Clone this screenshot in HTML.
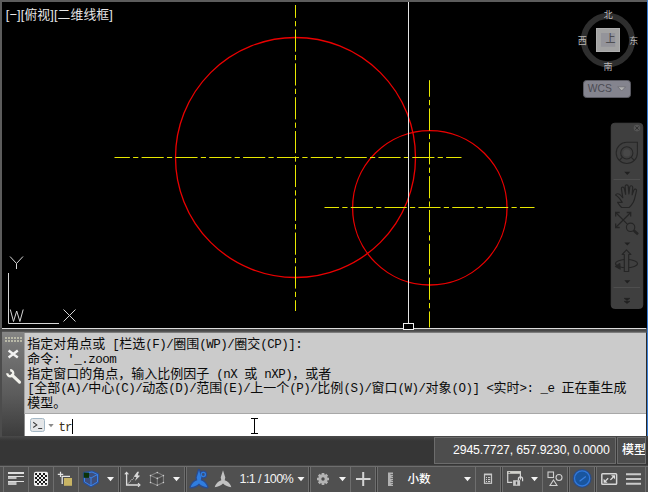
<!DOCTYPE html>
<html lang="zh-CN">
<head>
<meta charset="utf-8">
<title>AutoCAD</title>
<style>
*{box-sizing:border-box;margin:0;padding:0}
html,body{width:648px;height:492px;overflow:hidden;background:#363636}
body{position:relative;font-family:"Liberation Sans","Noto Sans CJK SC",sans-serif}
.abs{position:absolute}
#canvas{left:0;top:0;width:648px;height:333px}
#vplabel{left:5.8px;top:7px;color:#e6e6e6;font-size:12.8px;line-height:16px;white-space:nowrap;letter-spacing:0.12px}
#compass span{position:absolute;color:#b8b8b8;font-size:9px;line-height:10px;font-family:"Liberation Sans","Noto Sans CJK SC",sans-serif}
#wcs{left:583px;top:80px;width:48px;height:18px;border-radius:3.5px;background:#84848e;border:1px solid #5a5a62;color:#4a4a52;font-size:10.3px;line-height:15.5px;padding-left:3.8px}
#gutter{left:2px;top:332px;width:22px;height:104px;background:linear-gradient(#868686 0,#767676 14px,#5b5b5b 63px,#3c3c3c 104px)}
#hist{left:24px;top:333px;width:622px;height:81px;background:#cbcbcb;border-left:1px solid #a2a2a2;border-bottom:1px solid #a8a8a8;overflow:hidden}
#hist div{position:absolute;left:2.2px;white-space:nowrap;color:#0a0a0a;font-family:"Liberation Mono","Noto Sans CJK SC",monospace;font-size:13px;font-weight:400;line-height:15px;height:15px}
#hist b{font-weight:normal;font-size:12.5px;letter-spacing:-0.5px;font-family:"Liberation Mono",monospace}
#input{left:24px;top:414px;width:622px;height:22px;background:#fff;border-left:1px solid #8c8c8c}
#input .t{position:absolute;left:33.4px;top:6.6px;font-family:"Liberation Mono",monospace;font-size:12.5px;letter-spacing:-0.833px;line-height:15px;color:#3a3020}
#status{left:0;top:466px;width:648px;height:26px;background:#505050;border-top:1px solid #6e6e6e}
#status i{position:absolute;top:0;width:1px;height:25px;background:#6e6e6e}
#status i.g{background:#3a3a3a}
#status .tx{position:absolute;color:#f2f2f2;font-size:12.6px;line-height:16px;top:4px;white-space:nowrap}
.box{border:1px solid #6c6c6c;background:#4d4d4d;color:#f4f4f4;white-space:nowrap}
</style>
</head>
<body>
<!-- drawing canvas -->
<svg id="canvas" class="abs" width="648" height="333" viewBox="0 0 648 333">
  <rect x="0" y="0" width="648" height="333" fill="#5c5c5c"/>
  <rect x="2" y="2" width="645" height="326" fill="#000"/>
  <rect x="647" y="0" width="1" height="333" fill="#3b7fd6"/>
  <!-- strip under canvas -->
  <rect x="0" y="328" width="647" height="5" fill="#484848"/>
  <rect x="2" y="328" width="644" height="1" fill="#dcdcdc"/>
  <rect x="2" y="331" width="644" height="1" fill="#565656"/>
  <rect x="2" y="332" width="644" height="1" fill="#7c7c7c"/>
  <!-- circles -->
  <g fill="none" stroke="#ea0000" stroke-width="1.3">
    <circle cx="295.5" cy="157.5" r="120"/>
    <circle cx="429.8" cy="207.8" r="77.2"/>
  </g>
  <!-- center lines -->
  <g stroke="#e8e800" stroke-width="1" stroke-dasharray="22.15 3.23 5.23 3.23" fill="none">
    <line x1="114.5" y1="157.5" x2="461.5" y2="157.5" stroke-dashoffset="6.775"/>
    <line x1="295.5" y1="5" x2="295.5" y2="311" stroke-dashoffset="9.300"/>
    <line x1="324.5" y1="207.5" x2="534.5" y2="207.5" stroke-dashoffset="7.595"/>
    <line x1="429.5" y1="80.2" x2="429.5" y2="327.4" stroke-dashoffset="5.6"/>
  </g>
  <!-- crosshair -->
  <rect x="408" y="2" width="1" height="321" fill="#e4e4e4"/>
  <rect x="403.5" y="323.5" width="10" height="6" fill="#000" stroke="#f0f0f0" stroke-width="1"/>
  <!-- UCS icon -->
  <g stroke="#d6d6d6" stroke-width="1" fill="none">
    <path d="M8.5 273v50.5H59"/>
    <path d="M10 256.5l6.5 7 6.5-7M16.5 263.5v5.5"/>
    <path d="M63.5 309.5l12 12M75.5 309.5l-12 12"/>
    <path d="M10.3 309.5l3.2 12 3.2-10.5 3.2 10.5 3.3-12"/>
  </g>
  <!-- view cube compass -->
  <circle cx="607.9" cy="40.15" r="24.1" fill="none" stroke="#2e2e2e" stroke-width="5.9"/>
  <rect x="596.500" y="28.500" width="23" height="23" fill="#a2a2a2" stroke="#aeaeae" stroke-width="1"/>
  <rect x="601" y="33" width="14.2" height="13.8" fill="#94949a"/>
</svg>

<div id="vplabel" class="abs">[−][俯视][二维线框]</div>

<div id="compass" class="abs" style="left:0;top:0">
  <span style="left:603.8px;top:9.6px">北</span>
  <span style="left:603.4px;top:61.6px">南</span>
  <span style="left:577.7px;top:35.6px">西</span>
  <span style="left:629.3px;top:35.8px">东</span>
  <span style="left:605.6px;top:34px;color:#3e3e42;font-size:10px">上</span>
</div>
<div id="wcs" class="abs">WCS<svg class="abs" style="left:32.6px;top:5px" width="10" height="7"><path d="M0.800 0.800h7.800l-3.900 4.200z" fill="#b0b0b0" stroke="#6c6c74" stroke-width=".8"/></svg></div>

<!-- navigation bar -->
<svg class="abs" style="left:610px;top:122px" width="34" height="188" viewBox="0 0 34 188">
  <rect x="1.200" y="1.200" width="31.600" height="185.300" rx="3.500" fill="#3f3f3f" stroke="#464646" stroke-width=".8"/>
  <circle cx="27" cy="6.100" r="3.300" fill="#555"/>
  <path d="M25.300 4.400l3.400 3.400M28.700 4.400l-3.400 3.400" stroke="#303030" stroke-width="1" fill="none"/>
  <g fill="none" stroke="#272727" stroke-width="1.100">
    <path d="M16.800 20.300h10.600v10.600a10.600 10.600 0 1 1-10.600-10.600z"/>
    <circle cx="16.800" cy="30.900" r="6.100"/>
    <circle cx="16.800" cy="30.900" r="3.700" fill="#484848" stroke="none"/>
    <path d="M12.500 35.200l-3.300 3.300M21.100 35.200l3.300 3.300"/>
  </g>
  <path d="M3.500 57.500h26.500M3.500 165.500h26.500" stroke="#4e4e4e" stroke-width="1" fill="none"/>
  <g fill="#202020">
    <path d="M14.300 49.800h6l-3 3.200z"/>
    <path d="M14.300 120.400h6l-3 3.200z"/>
    <path d="M14.300 158.200h6l-3 3.200z"/>
  </g>
  <!-- hand -->
  <g fill="none" stroke="#252525" stroke-width="1.050" stroke-linejoin="round" stroke-linecap="round" transform="translate(-0.9 -4.2) scale(1.14 1.07)">
    <path d="M11.500 79c-1.500-2.500-3.300-5.300-5.800-6.800 0.600-1.700 3-1.700 4.600 0.400l1.700 2.100-1.200-8.200c-0.300-1.900 2-2.400 2.500-0.500l1.200 5.500-0.400-7.300c-0.100-2 2.500-2.100 2.700-0.100l0.600 7 0.700-6.300c0.300-1.900 2.700-1.600 2.600 0.300l-0.500 6.800 1.500-4.300c0.700-1.700 2.800-1 2.300 0.800-1 4-1.300 7.800-2.800 10.500-1 1.800-2 3.400-3.500 4.900h-6.700c-1.600-1.200-2.300-2.600-3.500-4.800z"/>
  </g>
  <!-- zoom extents -->
  <g fill="none" stroke="#252525" stroke-width="1.150">
    <path d="M6.200 91l13.600 13.600M20.200 91l-14 14"/>
    <path d="M5.700 94.500v-4h4M16.700 90.500h4v4M5.700 101.500v4h4" stroke-width="1.300"/>
    <circle cx="20.600" cy="105.300" r="4.200" fill="#3f3f3f"/>
    <path d="M23.800 108.600l4.200 3.700" stroke-width="2.600"/>
  </g>
  <!-- orbit -->
  <g fill="none" stroke="#252525" stroke-width="1.150" stroke-linejoin="round">
    <ellipse cx="16.500" cy="141.600" rx="11" ry="4.100"/>
    <path d="M14.300 149.500v-17h-2.100l4.300-4.700 4.300 4.700h-2.100v17z" fill="#3f3f3f"/>
    <path d="M9.800 141.500l-4.300 3 4.600 2.600z" fill="#252525"/>
  </g>
  <path d="M14 176.300l3 2.300 3-2.300zM14 179.300l3 2.300 3-2.300z" fill="#202020" stroke="#202020" stroke-width=".5"/>
</svg>

<!-- command line -->
<div id="gutter" class="abs">
  <svg class="abs" style="left:0;top:0" width="22" height="104" viewBox="0 0 22 104">
    <g fill="#b9b9a8">
      <rect x="3" y="5" width="2" height="2"/><rect x="6" y="5" width="2" height="2"/><rect x="9" y="5" width="2" height="2"/><rect x="12" y="5" width="2" height="2"/><rect x="15" y="5" width="2" height="2"/><rect x="18" y="5" width="2" height="2"/>
      <rect x="3" y="8" width="2" height="2"/><rect x="6" y="8" width="2" height="2"/><rect x="9" y="8" width="2" height="2"/><rect x="12" y="8" width="2" height="2"/><rect x="15" y="8" width="2" height="2"/><rect x="18" y="8" width="2" height="2"/>
    </g>
    <path d="M6.600 18.500l9.200 7M15.800 18.500l-9.200 7" stroke="#f2f2f2" stroke-width="2.400" fill="none"/>
    <g transform="translate(8.300 41.300) rotate(44)" fill="none" stroke="#f2f2ec">
      <path d="M-2.200 2.100A3 3 0 1 0 -2.200 -2.100" stroke-width="2.300"/>
      <path d="M2.500 0h10.300" stroke-width="3.100" stroke-linecap="round"/>
    </g>
  </svg>
</div>
<div id="hist" class="abs">
  <div style="top:4px">指定对角点或<b> [</b>栏选<b>(F)/</b>圈围<b>(WP)/</b>圈交<b>(CP)]:</b></div>
  <div style="top:18.75px">命令<b>: '_.zoom</b></div>
  <div style="top:33.5px">指定窗口的角点，输入比例因子<b> (nX </b>或<b> nXP)</b>，或者</div>
  <div style="top:48.25px"><b>[</b>全部<b>(A)/</b>中心<b>(C)/</b>动态<b>(D)/</b>范围<b>(E)/</b>上一个<b>(P)/</b>比例<b>(S)/</b>窗口<b>(W)/</b>对象<b>(O)] &lt;</b>实时<b>&gt;: _e </b>正在重生成</div>
  <div style="top:63px">模型。</div>
</div>
<div id="input" class="abs">
  <svg class="abs" style="left:0;top:0" width="260" height="22" viewBox="0 0 260 22">
    <rect x="5.500" y="4.500" width="14" height="13" rx="2" fill="#e4e6e8" stroke="#a4b8c6"/>
    <path d="M8.200 8.300l3.600 2.600-3.600 2.600" fill="none" stroke="#3a3a3a" stroke-width="1.050"/>
    <path d="M13.200 14.500h4" stroke="#3a3a3a" stroke-width="1"/>
    <path d="M23.300 10h5.400l-2.700 3.200z" fill="#8a8a8a"/>
    <rect x="47" y="5" width="1" height="15" fill="#000"/>
    <path d="M226 4.500h3M230 4.500h3M226 19.500h3M230 19.500h3" stroke="#000" stroke-width="1"/>
    <rect x="229" y="4" width="1" height="16" fill="#000"/>
  </svg>
  <span class="t">tr</span>
</div>
<div class="abs" style="left:0;top:436px;width:648px;height:30px;background:linear-gradient(#4a4a4a 0,#3c3c3c 3px,#363636 5px,#363636 29px,#464646 29px)"></div>
<div class="abs" style="left:0;top:332px;width:2px;height:105px;background:#4c4c4c"></div>
<div class="abs" style="left:647px;top:333px;width:1px;height:103px;background:#3b7fd6"></div>
<div class="abs" style="left:646px;top:333px;width:1px;height:103px;background:#2a2a2a"></div>

<!-- coordinates -->
<div class="abs box" style="left:434px;top:437px;width:182px;height:27px;font-size:12.3px;line-height:25px;padding-left:18px;letter-spacing:-0.15px;color:#fff">2945.7727, 657.9230, 0.0000</div>
<div class="abs box" style="left:617px;top:437px;width:29px;height:27px;font-size:12px;font-weight:500;line-height:25px;padding-left:4px;overflow:hidden;color:#fff">模型</div>

<!-- status bar -->
<div id="status" class="abs">
  <i style="left:3px"></i><i style="left:28px"></i><i style="left:53px"></i><i style="left:78px"></i>
  <i style="left:118px"></i><i class="g" style="left:119px"></i><i style="left:120px"></i>
  <i style="left:184px"></i><i class="g" style="left:185px"></i><i style="left:186px"></i>
  <i style="left:308px"></i><i class="g" style="left:309px"></i><i style="left:310px"></i>
  <i style="left:350px"></i>
  <i style="left:375px"></i><i class="g" style="left:376px"></i><i style="left:377px"></i>
  <i style="left:475px"></i>
  <i style="left:500px"></i><i class="g" style="left:501px"></i><i style="left:502px"></i>
  <i style="left:542px"></i>
  <i style="left:567px"></i><i class="g" style="left:568px"></i><i style="left:569px"></i>
  <i style="left:594px"></i><i class="g" style="left:595px"></i><i style="left:596px"></i>
  <i style="left:645px"></i>
  <span class="tx" style="left:239.6px;letter-spacing:-0.68px;top:4.4px">1:1 / 100%</span>
  <span class="tx" style="left:407.5px;font-size:11.6px;top:4px;font-weight:500;color:#fff">小数</span>
  <svg class="abs" style="left:0;top:0" width="648" height="25" viewBox="0 467 648 25">
    <!-- dropdown triangles -->
    <g fill="#f4f4f4">
      <path d="M107 477h7l-3.500 4.200z"/><path d="M173 477h7l-3.500 4.200z"/><path d="M297.500 477h7l-3.500 4.200z"/>
      <path d="M339 477h7l-3.500 4.200z"/><path d="M464 477h7l-3.500 4.200z"/><path d="M531 477h7l-3.500 4.200z"/>
    </g>
    <!-- icon 1 bars -->
    <g>
      <rect x="8" y="472" width="16" height="2" fill="#dedede"/>
      <rect x="8" y="476" width="16" height="1" fill="#dedede"/><rect x="8" y="477" width="8.500" height="2" fill="#c2c2c2"/>
      <rect x="8" y="481" width="16" height="1" fill="#dedede"/><rect x="8" y="482" width="8.500" height="3" fill="#c2c2c2"/>
    </g>
    <!-- icon 2 checker -->
    <g>
      <rect x="34.500" y="472.400" width="13" height="13" rx="1.200" fill="#161616" stroke="#ececec" stroke-width="1.100"/>
      <g fill="#f0f0f0"><rect x="37" y="473" width="2" height="2"/><rect x="41" y="473" width="2" height="2"/><rect x="45" y="473" width="2" height="2"/><rect x="35" y="475" width="2" height="2"/><rect x="39" y="475" width="2" height="2"/><rect x="43" y="475" width="2" height="2"/><rect x="37" y="477" width="2" height="2"/><rect x="41" y="477" width="2" height="2"/><rect x="45" y="477" width="2" height="2"/><rect x="35" y="479" width="2" height="2"/><rect x="39" y="479" width="2" height="2"/><rect x="43" y="479" width="2" height="2"/><rect x="37" y="481" width="2" height="2"/><rect x="41" y="481" width="2" height="2"/><rect x="45" y="481" width="2" height="2"/><rect x="35" y="483" width="2" height="2"/><rect x="39" y="483" width="2" height="2"/><rect x="43" y="483" width="2" height="2"/></g>
    </g>
    <!-- icon 3 -->
    <path d="M57.800 474.400h5.400M60.500 471.700v5.400" stroke="#e4e4e4" stroke-width="1.200"/>
    <path d="M62.200 484v-7.600h7.800" fill="none" stroke="#e4e4e4" stroke-width="1.300"/>
    <rect x="64" y="478" width="8" height="7.800" fill="#c8b464"/>
    <!-- icon 4 blue cube -->
    <g>
      <path d="M84.500 473.300l7.500-1.300 5.500 2.500v7.500l-6.500 3.800-6.500-4z" fill="#3a4f82" stroke="#2d4f94" stroke-width="3.200" stroke-linejoin="round"/>
      <path d="M84.500 473.300l7.500-1.300 5.500 2.500v7.500l-6.500 3.800-6.500-4z" fill="#3f4f7c" stroke="#3a84ea" stroke-width="1" stroke-linejoin="round"/>
      <path d="M85 474.500l6 3.500 6.500-3.500M91 478v7.800" fill="none" stroke="#3a84ea" stroke-width="1"/>
      <rect x="83.700" y="472.600" width="5.400" height="5.200" fill="#0b3309"/>
    </g>
    <!-- icon 5 axes -->
    <g fill="none" stroke="#dcdcdc" stroke-width="1.300">
      <path d="M126.600 473v12h12.500"/>
      <path d="M124.800 474.300l1.800-2 1.800 2M138 483.200l2 1.800-2 1.800" stroke-width="1.100"/>
      <path d="M128 483.600l6-6" stroke-width="1" stroke-dasharray="1.600 .8"/>
    </g>
    <path d="M137.300 471.800l-3.600 4.900 2.800 0.400-1.600 4 5.200-5.300-2.400-0.500 1.300-3.500z" fill="#d8d8d8"/>
    <!-- icon 6 wire cube -->
    <g fill="#494949" stroke="#848484" stroke-width="1.050" stroke-linejoin="round">
      <path d="M157.300 472.500l6.100 3.100v6.900l-6.100 2.800-6.800-2.800v-6.900z"/>
      <path d="M150.500 475.600l6.800 2.800 6.100-2.800M157.300 478.400v6.900" fill="none"/>
    </g>
    <g fill="#cfcfcf"><circle cx="157.300" cy="472.500" r=".8"/><circle cx="150.500" cy="475.600" r=".8"/><circle cx="163.400" cy="475.600" r=".8"/><circle cx="157.300" cy="478.400" r=".8"/><circle cx="150.500" cy="482.500" r=".8"/><circle cx="163.400" cy="482.500" r=".8"/><circle cx="157.300" cy="485.300" r=".8"/></g>
    <!-- icon 7 blue annotation -->
    <g>
      <path d="M199 470.200Q200.2 474 201.3 477.600L200.7 480.200Q205.6 481.600 207.3 487.200Q202.4 487 199 483.600Q195.6 487 190.7 487.200Q192.4 481.600 197.3 480.200L196.7 477.600Q197.8 474 199 470.200z" fill="#2f7de0" stroke="#2b4c8e" stroke-width="2.600" stroke-linejoin="round"/>
      <circle cx="203.300" cy="474.500" r="2.700" fill="#2b4c8e" stroke="#2b4c8e" stroke-width="2.400"/>
      <path d="M199 470.200Q200.2 474 201.3 477.600L200.7 480.200Q205.6 481.600 207.3 487.200Q202.4 487 199 483.600Q195.6 487 190.7 487.200Q192.4 481.600 197.3 480.200L196.7 477.600Q197.8 474 199 470.200z" fill="#2f7de0"/>
      <circle cx="203.300" cy="474.500" r="2.100" fill="#3c4f78" stroke="#2f7de0" stroke-width="1.300"/>
    </g>
    <!-- icon 8 gray star -->
    <path d="M223 470.200Q224.2 474 225.3 477.600L224.7 480.200Q229.6 481.600 231.3 487.200Q226.4 487 223 483.600Q219.6 487 214.7 487.200Q216.4 481.600 221.3 480.200L220.7 477.600Q221.8 474 223 470.200z" fill="#c2c2c2"/>
    <!-- gear -->
    <g>
      <g stroke="#b4b4b4" stroke-width="2.700">
        <path d="M323 473v12M317 479h12M318.800 474.800l8.400 8.400M327.200 474.800l-8.400 8.400"/>
      </g>
      <circle cx="323" cy="479" r="4.700" fill="#b4b4b4"/>
      <circle cx="323" cy="479" r="1.700" fill="#4c4c4c"/>
    </g>
    <!-- plus -->
    <path d="M356 479h14.500M363.200 472v14" stroke="#d4d4d4" stroke-width="2"/>
    <!-- ruler -->
    <g>
      <rect x="388" y="472.500" width="5" height="13.500" fill="#b2b2b2"/>
      <path d="M390.500 474.500h2.500M391.500 476.500h1.500M390.500 478.500h2.500M391.500 480.500h1.500M390.500 482.500h2.500M391.500 484.500h1.500" stroke="#6a6a6a" stroke-width="1"/>
    </g>
    <!-- calc -->
    <g>
      <rect x="484.500" y="474.300" width="7" height="9" fill="none" stroke="#c8c8c8" stroke-width="1.200"/>
      <rect x="484" y="473.700" width="8" height="1.600" fill="#c8c8c8"/>
      <path d="M486 477.600h1M488 477.600h2.200M486 479.600h1M488 479.600h2.200M486 481.500h1M488 481.500h2.200" stroke="#d4d4d4" stroke-width="1"/>
    </g>
    <!-- window + lock -->
    <g>
      <path d="M512.500 482.400h-4.800v-10.600h12.700v8" fill="none" stroke="#d2d2d2" stroke-width="1.200"/>
      <rect x="507.200" y="471.300" width="13.700" height="2.500" fill="#d2d2cc"/>
      <rect x="508.500" y="472.100" width="1.600" height="1" fill="#555"/>
      <rect x="512.500" y="479.600" width="8" height="6.600" fill="#4f4f4f"/>
      <rect x="513.100" y="480.200" width="7" height="5.600" fill="#c9c9c9"/>
      <path d="M518.400 480.200v-1.300a2.100 2.100 0 0 1 4.200 0v2.300" fill="none" stroke="#d6d6d6" stroke-width="1.200"/>
      <rect x="515.800" y="481.600" width="1.400" height="3" fill="#4a4a4a"/>
    </g>
    <!-- shapes -->
    <g fill="none" stroke="#cfcfcf" stroke-width="1.100">
      <rect x="548" y="472" width="5.500" height="5.500"/>
      <circle cx="559" cy="477.500" r="3"/>
      <path d="M553.500 480l3.500 5.500h-7z"/>
    </g>
    <!-- blue circle -->
    <circle cx="582.100" cy="478.400" r="9.500" fill="#2c4c82"/>
    <circle cx="582.100" cy="478.400" r="7.600" fill="#19559e" stroke="#2f78dc" stroke-width="1.300"/>
    <path d="M579.600 481.200l6.200-4.600" stroke="#3a80e2" stroke-width="1.200"/>
    <!-- fullscreen -->
    <g>
      <rect x="601.800" y="473.800" width="14.800" height="10.400" rx="0.800" fill="none" stroke="#d6d6d6" stroke-width="1.500"/>
      <path d="M603.600 482.800v-4l4 4zM615 475.300v4l-4-4z" fill="#e0e0e0"/>
      <path d="M605.500 480.900l2.700-2.700M613.100 477.200l-2.700 2.700" stroke="#e0e0e0" stroke-width="1.300"/>
    </g>
    <!-- hamburger -->
    <path d="M626 474.200h15M626 479h15M626 483.800h15" stroke="#c9c9c9" stroke-width="2"/>
  </svg>
</div>
</body>
</html>
